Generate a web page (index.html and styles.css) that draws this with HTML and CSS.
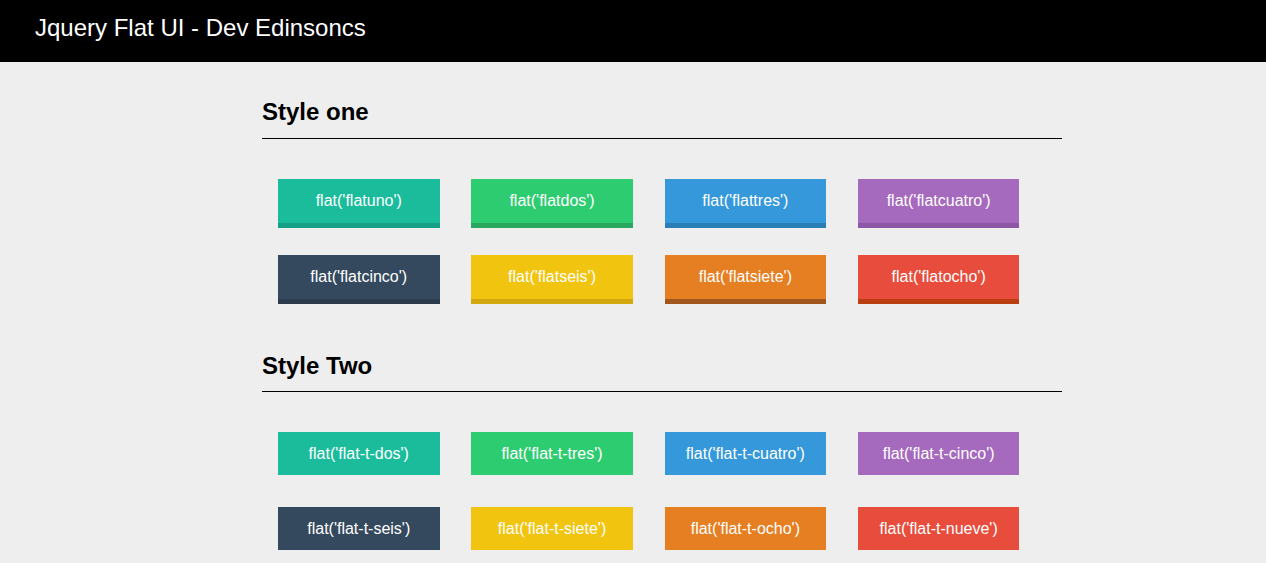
FILE: index.html
```html
<!DOCTYPE html>
<html>
<head>
<meta charset="utf-8">
<title>Jquery Flat UI - Dev Edinsoncs</title>
<link rel="stylesheet" href="styles.css">
</head>
<body>
<header class="topbar">
  <h1 class="brand">Jquery Flat UI - Dev Edinsoncs</h1>
</header>
<main class="content">
  <section class="section">
    <h2 class="section-title">Style one</h2>
    <div class="btn-grid grid-one">
      <div class="btn one c-uno">flat('flatuno')</div>
      <div class="btn one c-dos">flat('flatdos')</div>
      <div class="btn one c-tres">flat('flattres')</div>
      <div class="btn one c-cuatro">flat('flatcuatro')</div>
      <div class="btn one c-cinco">flat('flatcinco')</div>
      <div class="btn one c-seis">flat('flatseis')</div>
      <div class="btn one c-siete">flat('flatsiete')</div>
      <div class="btn one c-ocho">flat('flatocho')</div>
    </div>
  </section>
  <section class="section section-two">
    <h2 class="section-title">Style Two</h2>
    <div class="btn-grid grid-two">
      <div class="btn two c-uno">flat('flat-t-dos')</div>
      <div class="btn two c-dos">flat('flat-t-tres')</div>
      <div class="btn two c-tres">flat('flat-t-cuatro')</div>
      <div class="btn two c-cuatro">flat('flat-t-cinco')</div>
      <div class="btn two c-cinco">flat('flat-t-seis')</div>
      <div class="btn two c-seis">flat('flat-t-siete')</div>
      <div class="btn two c-siete">flat('flat-t-ocho')</div>
      <div class="btn two c-ocho">flat('flat-t-nueve')</div>
    </div>
  </section>
</main>
</body>
</html>
```
FILE: styles.css
```css
* { box-sizing: border-box; }
html, body {
  margin: 0;
  padding: 0;
  background: #eeeeee;
  font-family: "Liberation Sans", Arial, sans-serif;
  color: #000;
}
.topbar {
  background: #000;
  height: 62px;
  padding: 14px 35px 0;
}
.brand {
  margin: 0;
  font-size: 24px;
  line-height: 28px;
  font-weight: normal;
  color: #fff;
}
.content {
  width: 800px;
  margin-left: 262px;
  padding-top: 35px;
}
.section-two { margin-top: 46px; }
.section-title {
  margin: 0;
  font-size: 24px;
  line-height: 28px;
  font-weight: bold;
  padding-top: 1px;
  padding-bottom: 12px;
  border-bottom: 1px solid #000;
}
.section-two .section-title {
  padding-top: 2px;
  padding-bottom: 11px;
}
.btn-grid {
  display: grid;
  grid-template-columns: repeat(4, 161.5px);
  column-gap: 31.8px;
  margin-top: 40px;
  padding-left: 16px;
}
.grid-one { row-gap: 27px; }
.grid-two { row-gap: 32px; }
.btn {
  color: #fff;
  font-size: 16px;
  text-align: center;
}
.btn.one {
  height: 49px;
  line-height: 44px;
  border-bottom: 5px solid transparent;
}
.btn.two {
  height: 43px;
  line-height: 43px;
}
.c-uno { background: #1abc9c; border-bottom-color: #16a085 !important; }
.c-dos { background: #2ecc71; border-bottom-color: #27a85e !important; }
.c-tres { background: #3498db; border-bottom-color: #2a7db5 !important; }
.c-cuatro { background: #a569bd; border-bottom-color: #8c57a4 !important; }
.c-cinco { background: #34495e; border-bottom-color: #2b3b4b !important; }
.c-seis { background: #f1c40f; border-bottom-color: #d4a80f !important; }
.c-siete { background: #e67e22; border-bottom-color: #a0561d !important; }
.c-ocho { background: #e74c3c; border-bottom-color: #bb3e10 !important; }
```
